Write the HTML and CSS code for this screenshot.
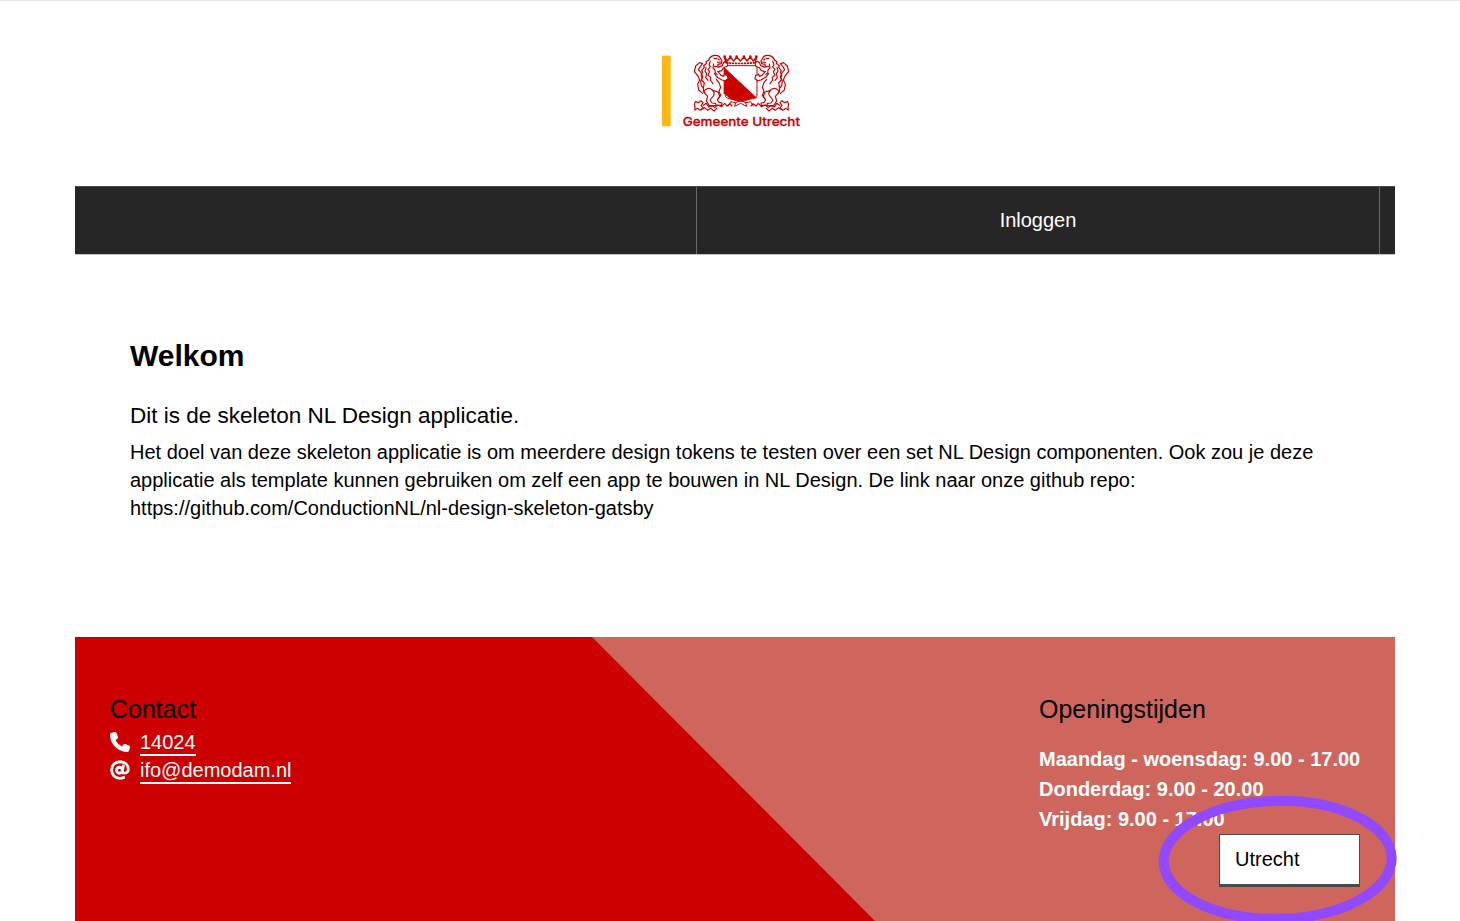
FILE: index.html
```html
<!DOCTYPE html>
<html lang="nl">
<head>
<meta charset="utf-8">
<title>Gemeente Utrecht</title>
<link rel="stylesheet" href="styles.css">
</head>
<body>
<div class="page">
  <header class="header">
    <svg class="logo" viewBox="0 0 480 270" role="img" aria-label="Gemeente Utrecht">
      <rect x="36" y="32" width="26" height="212" fill="#ffb612"/>
      <defs>
        <g id="lion" fill="none" stroke="#c00" stroke-width="3.500" stroke-linejoin="round" stroke-linecap="round" transform="translate(120 15)">
          <path d="M56 30q4-12 18-14 14-1 17 9l5 8-2 8-10 2-1 7-10-1M72 25l8 1M84 27l4 3M92 36l-9 1"/>
          <path d="M56 30l-8 5 2 5-9 7 2 5-8 10 3 5-5 10 4 5-2 8 8 9-2 10q-3 13 4 20"/>
          <path d="M61 34l-4 10 4 6-7 9 5 6-5 10 8 7-1 8 8 11M71 42l-2 12 6 6 1 9 7 5M48 52l-3 12 5 7-3 12 7 8"/>
          <path fill="#fff" d="M84 52l13-5 4-10 8-3 5 6-3 9-10 4-6 9-11 3"/>
          <path fill="#fff" d="M83 64l10 12 8 3 2-6 9 3 2 10-8 6-10-2-14-8"/>
          <path d="M82 82l-9-12M79 88l8 10 5 14-5 12 5 12-7 10M41 124q14-16 26-4 12 12-2 24l-5 6 6 9 11 1 1 7H58l-9-14 4-14-11-12"/>
          <path d="M71 122l13 4 5 12-7 12 5 7 9 2-1 7H80"/>
          <path d="M38 130l-12-10-3-17 6-13-5-12-11-13 4-17 12-10 9 3-7 8-6 10 8 9 5 12-6 14 2 13 7 9"/>
          <path d="M13 164l3-9 9 3 8-6 6 6-6 9 6 6-9 8-7-6-9 5 1-9zM40 166l9-6 7 11 11-4 7 6 9-8 12 5 9-10 7 8 9-7 6 7M32 180l12-7 9 8 10-6 9 8 8-8"/>
        </g>
      </defs>
      <path d="M221 65L322 160Q305 160 294 164Q272 172 250 165Q238 163 231 153L221 146Z" fill="#c00"/>
      <path d="M225 62h96v88q-1 11-24 13q-12 6-25 6t-24-6q-22-2-23-13" fill="none" stroke="#c00" stroke-width="3"/>
      <use href="#lion"/>
      <use href="#lion" transform="translate(549 0) scale(-1 1)"/>
      <path d="M228 55l-5-19M315 55l5-19M223 36l9 12 9-12 10 12 9-12 11 12 11-12 9 12 10-12 9 12 9-12" fill="none" stroke="#c00" stroke-width="4" stroke-linejoin="round"/>
      <g fill="#c00"><circle cx="224" cy="35" r="4"/><circle cx="241" cy="35" r="4"/><circle cx="260" cy="35" r="4"/><circle cx="282" cy="35" r="4"/><circle cx="301" cy="35" r="4"/><circle cx="319" cy="35" r="4"/></g>
      <path d="M228 53q43 5 86 0" fill="none" stroke="#c00" stroke-width="5" stroke-dasharray="7 2"/>
      <path d="M234 184l8-14 14 3 16-6 16 6 14-3 8 14M257 173l-3 11 18-9 18 9-3-11" fill="none" stroke="#c00" stroke-width="3"/>
      <text class="logo-name" x="98" y="243" textLength="352" lengthAdjust="spacingAndGlyphs">Gemeente Utrecht</text>
    </svg>
  </header>
  <nav class="nav">
    <span class="nav-space"></span>
    <a class="nav-link">Inloggen</a>
  </nav>
  <main class="content">
    <h1 class="title">Welkom</h1>
    <h2 class="lead">Dit is de skeleton NL Design applicatie.</h2>
    <p class="body-text">Het doel van deze skeleton applicatie is om meerdere design tokens te testen over een set NL Design componenten. Ook zou je deze<br>applicatie als template kunnen gebruiken om zelf een app te bouwen in NL Design. De link naar onze github repo:<br>https://github.com/ConductionNL/nl-design-skeleton-gatsby</p>
  </main>
  <footer class="footer">
    <section class="contact">
      <h3 class="footer-title">Contact</h3>
      <div class="contact-row">
        <svg class="icon" viewBox="0 0 512 512"><path fill="#fff" d="M164.900 24.600c-7.700-18.600-28-28.500-47.400-23.200l-88 24C12.100 30.200 0 46 0 64c0 247.400 200.600 448 448 448 18 0 33.800-12.100 38.600-29.500l24-88c5.300-19.400-4.600-39.700-23.200-47.400l-96-40c-16.300-6.800-35.200-2.100-46.300 11.600L304.700 368C234.300 334.700 177.300 277.700 144 207.300L193.300 167c13.700-11.200 18.400-30 11.600-46.300l-40-96z"/></svg>
        <a class="link">14024</a>
      </div>
      <div class="contact-row">
        <svg class="icon" viewBox="0 0 512 512"><path fill="none" stroke="#fff" stroke-width="72" stroke-linecap="round" d="M340 150l-22 132c-6 36 14 54 46 54 54 0 104-34 104-96C468 124 380 44 256 44 132 44 42 136 42 256s90 212 214 212c34 0 66-8 94-22"/><ellipse cx="242" cy="262" rx="76" ry="76" fill="none" stroke="#fff" stroke-width="74"/></svg>
        <a class="link">ifo@demodam.nl</a>
      </div>
    </section>
    <section class="hours">
      <h3 class="footer-title">Openingstijden</h3>
      <ul class="hours-list">
        <li>Maandag - woensdag: 9.00 - 17.00</li>
        <li>Donderdag: 9.00 - 20.00</li>
        <li>Vrijdag: 9.00 - 17.00</li>
      </ul>
      <div class="select">Utrecht</div>
    </section>
    <svg class="marker" viewBox="0 0 240 130"><ellipse cx="119.700" cy="63.800" rx="114" ry="59" transform="rotate(-1 119.700 63.800)" fill="none" stroke="#9149ff" stroke-width="10"/></svg>
  </footer>
</div>
</body>
</html>
```

FILE: styles.css
```css
* { box-sizing: border-box; }
body {
  margin: 0;
  height: 921px;
  overflow: hidden;
  background: #fff;
  border-top: 1px solid #e8e8e8;
  color: #000;
  font: 20px/28px "Liberation Sans", Arial, sans-serif;
}
.page { width: 1320px; margin-left: 75px; }
.header { height: 185px; padding: 44px 0 0 575px; }
.logo { display: block; width: 160px; height: 90px; }
.logo-name { font: 500 37px Inter, sans-serif; fill: #c00; stroke: #c00; stroke-width: .8px; }
.nav {
  display: flex;
  height: 69px;
  padding-right: 15px;
  background: #262626;
  border-top: 1px solid #4b4b4b;
  border-bottom: 1px solid #c4c4c4;
  color: #fff;
}
.nav-space { width: 622px; border-right: 1px solid #696969; }
.nav-link {
  flex: 1;
  border-right: 1px solid #696969;
  text-align: center;
  line-height: 67px;
}
.content { height: 382px; padding: 80px 55px 0; }
.title { margin: 0; font-size: 30px; line-height: 42px; }
.lead { margin: 23px 0 6px; font-size: 22.500px; line-height: 32px; font-weight: 400; }
.body-text { margin: 0; white-space: nowrap; }
.footer {
  position: relative;
  display: flex;
  justify-content: space-between;
  height: 284px;
  padding: 54px 35px 0;
  background: #cf665e;
  isolation: isolate;
}
.footer::before {
  content: "";
  position: absolute;
  inset: 0;
  z-index: -1;
  background: #c00;
  clip-path: polygon(0 0, 517px 0, 800px 100%, 0 100%);
}
.footer-title { margin: 0; font-size: 25px; line-height: 36px; font-weight: 400; }
.contact-row { display: flex; gap: 10px; height: 28px; padding-top: 4px; }
.icon { width: 20px; height: 20px; margin-top: 1px; }
.link { height: 25px; line-height: 22px; color: #fff; border-bottom: 2px solid #fff; }
.hours { display: flex; flex-direction: column; width: 321px; }
.hours-list {
  margin: 17px 0 0;
  padding: 0;
  list-style: none;
  color: #fff;
  font-weight: 700;
  line-height: 30px;
  white-space: nowrap;
}
.select {
  align-self: flex-end;
  width: 141px;
  height: 53px;
  padding-left: 15px;
  background: #fff;
  border: 1px solid #4b4b4b;
  border-bottom-width: 3px;
  line-height: 49px;
}
.marker { position: absolute; left: 1083px; top: 159px; width: 240px; height: 130px; overflow: visible; }
```
